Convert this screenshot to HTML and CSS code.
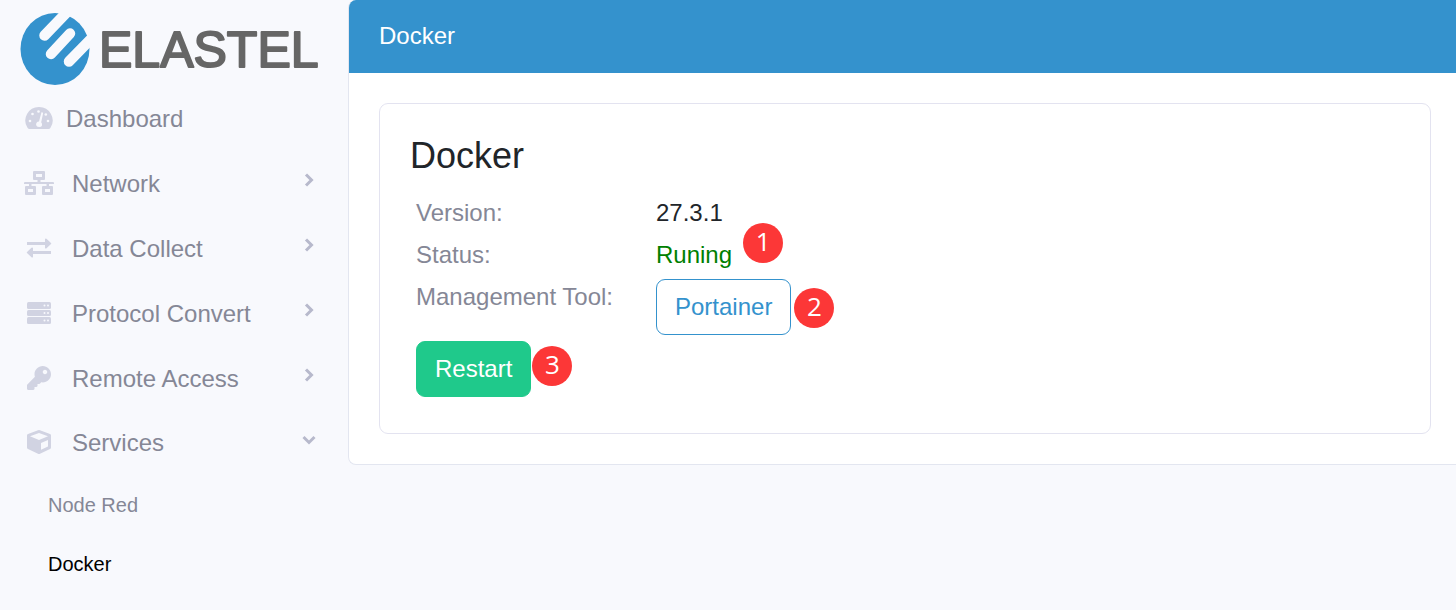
FILE: index.html
```html
<!DOCTYPE html>
<html lang="en">
<head>
<meta charset="utf-8">
<meta name="viewport" content="width=device-width, initial-scale=1">
<title>Docker</title>
<link rel="stylesheet" href="styles.css">
</head>
<body>
<div class="layout">
  <aside class="sidebar">
    <a class="brand" href="#" aria-label="Elastel">
      <svg class="brand-logo" viewBox="0 0 304 76">
        <defs><clipPath id="disc"><ellipse cx="35" cy="37" rx="35.500" ry="37"/></clipPath></defs>
        <ellipse cx="35" cy="37" rx="34.500" ry="36" fill="#3492cd"/>
        <g clip-path="url(#disc)" fill="none" stroke="#f8f9fd" stroke-width="10.500" stroke-linecap="round" stroke-linejoin="round">
          <path d="M24.500 23.500L48 -1"/>
          <path d="M31 42L50 21.500"/>
          <path d="M49 49.500L74 24"/>
        </g>
        <text class="brand-name" x="79" y="55">ELASTEL</text>
      </svg>
    </a>
    <nav class="nav">
      <a class="nav-item nav-item-plain" href="#">
        <svg class="nav-icon" viewBox="0 0 30 26"><path d="M15 1A13.500 13.500 0 0 0 3.500 21.800Q4.200 23 5.500 23H24.500Q25.800 23 26.500 21.800A13.500 13.500 0 0 0 15 1Z"/><g class="cut"><circle cx="14.500" cy="5.500" r="1.300"/><circle cx="8.500" cy="8" r="1.300"/><circle cx="6" cy="15" r="1.300"/><circle cx="24" cy="15" r="1.300"/><circle cx="21.800" cy="8.500" r="1.300"/><path d="M17.500 6.200Q18.900 6 19.100 7.200L17.200 16.200Q18.400 17.600 18 19.500Q17.500 21 15 21Q12.500 21 12.100 19Q12 16 15 15.600Z"/></g></svg>
        <span>Dashboard</span>
      </a>
      <a class="nav-item" href="#">
        <svg class="nav-icon" viewBox="0 0 30 26"><path fill-rule="evenodd" d="M10 1H20Q21 1 21 2V9Q21 10 20 10H16.500V12H29Q30 12 30 13V14H25V16H28Q29 16 29 17V24Q29 25 28 25H19Q18 25 18 24V17Q18 16 19 16H22.500V14H7.500V16H11Q12 16 12 17V24Q12 25 11 25H2Q1 25 1 24V17Q1 16 2 16H5V14H0V13Q0 12 1 12H13.500V10H10Q9 10 9 9V2Q9 1 10 1ZM12 4V7H18V4ZM4 19V22H9V19ZM21 19V22H26V19Z"/></svg>
        <span class="nav-label">Network</span>
        <svg class="chevron" viewBox="0 0 14 14"><path d="M4 1.500L9.500 7L4 12.500"/></svg>
      </a>
      <a class="nav-item" href="#">
        <svg class="nav-icon" viewBox="0 0 30 26"><path d="M3 7H21V4Q21.500 3 22.500 3.700L27 8Q27.500 8.500 27 9L22.500 13.300Q21.500 14 21 13V10H3ZM27 16H9V13Q8.500 12 7.500 12.700L3 17Q2.500 17.500 3 18L7.500 22.300Q8.500 23 9 22V19H27Z"/></svg>
        <span class="nav-label">Data Collect</span>
        <svg class="chevron" viewBox="0 0 14 14"><path d="M4 1.500L9.500 7L4 12.500"/></svg>
      </a>
      <a class="nav-item" href="#">
        <svg class="nav-icon" viewBox="0 0 30 26"><rect x="3" y="2" width="24" height="7" rx="1.500"/><rect x="3" y="10" width="24" height="6" rx="1.500"/><rect x="3" y="17" width="24" height="7" rx="1.500"/><g class="cut"><circle cx="20.500" cy="5.500" r="1"/><circle cx="24" cy="5.500" r="1"/><circle cx="20.500" cy="13" r="1"/><circle cx="24" cy="13" r="1"/><circle cx="20.500" cy="20.500" r="1"/><circle cx="24" cy="20.500" r="1"/></g></svg>
        <span class="nav-label">Protocol Convert</span>
        <svg class="chevron" viewBox="0 0 14 14"><path d="M4 1.500L9.500 7L4 12.500"/></svg>
      </a>
      <a class="nav-item" href="#">
        <svg class="nav-icon" viewBox="-64 -21 640 555"><path d="M512 176.001C512 273.203 433.202 352 336 352c-11.220 0-22.190-1.062-32.827-3.069l-24.012 27.014A23.999 23.999 0 0 1 261.223 384H224v40c0 13.255-10.745 24-24 24h-40v40c0 13.255-10.745 24-24 24H24c-13.255 0-24-10.745-24-24v-78.059c0-6.365 2.529-12.470 7.029-16.971l161.802-161.802C163.108 213.814 160 195.271 160 176 160 78.798 238.797.001 335.999 0 433.488-.001 512 78.511 512 176.001zM336 128c0 26.510 21.490 48 48 48s48-21.490 48-48-21.490-48-48-48-48 21.490-48 48z"/></svg>
        <span class="nav-label">Remote Access</span>
        <svg class="chevron" viewBox="0 0 14 14"><path d="M4 1.500L9.500 7L4 12.500"/></svg>
      </a>
      <a class="nav-item" href="#" aria-expanded="true">
        <svg class="nav-icon" viewBox="0 0 30 26"><path fill-rule="evenodd" d="M14 .3Q15 -.1 16 .3L26 4Q27 4.400 27 5.500V17.500Q27 18.600 26 19.100L16 23.700Q15 24.200 14 23.700L4 19.100Q3 18.600 3 17.500V5.500Q3 4.400 4 4ZM15 3L6 6.300L15 10L24 6.300ZM17 13V19.800L24 16.500V10Z"/></svg>
        <span>Services</span>
        <svg class="chevron" viewBox="0 0 14 14"><path d="M1.500 4L7 9.500L12.500 4"/></svg>
      </a>
      <div class="subnav">
        <a href="#">Node Red</a>
        <a class="active" href="#" aria-current="page">Docker</a>
      </div>
    </nav>
  </aside>
  <main class="panel">
    <header class="panel-header">Docker</header>
    <div class="panel-body">
      <section class="card">
        <h1>Docker</h1>
        <dl class="details">
          <dt>Version:</dt>
          <dd>27.3.1</dd>
          <dt>Status:</dt>
          <dd class="running"><span class="anchor">Runing<span class="pin pin-status">1</span></span></dd>
          <dt>Management Tool:</dt>
          <dd><span class="anchor"><button class="btn btn-outline" type="button">Portainer</button><span class="pin pin-tool">2</span></span></dd>
        </dl>
        <span class="anchor restart"><button class="btn btn-green" type="button">Restart</button><span class="pin pin-restart">3</span></span>
      </section>
    </div>
  </main>
</div>
</body>
</html>
```

FILE: styles.css
```css
* { box-sizing: border-box; }

body {
  margin: 0;
  background: #f8f9fd;
  color: #212529;
  font: 24px/36px "Liberation Sans", Arial, sans-serif;
}

a { color: inherit; text-decoration: none; }

.layout { display: flex; align-items: flex-start; }

.sidebar { flex: 0 0 348px; color: #858796; }

.brand { display: block; padding: 12px 0 0 20px; }
.brand-logo { display: block; width: 304px; height: 76px; }
.brand-name {
  font: 50px "Liberation Sans", Arial, sans-serif;
  fill: #666;
  stroke: #666;
  stroke-width: 2px;
  stroke-linejoin: round;
}

.nav { display: flex; flex-direction: column; }
.nav-item {
  display: flex;
  align-items: center;
  gap: 18px;
  height: 65px;
  padding: 0 32px 0 24px;
}
.nav-item-plain { gap: 12px; height: 62px; }
.nav-label { padding-top: 2px; }
.nav-icon { width: 30px; height: 26px; fill: #d1d3e2; }
.cut { fill: #f8f9fd; }
.chevron {
  width: 14px;
  height: 14px;
  margin: 0 0 5px auto;
  fill: none;
  stroke: #b7b9cc;
  stroke-width: 3;
}

.subnav { display: flex; flex-direction: column; padding: 1px 0 0 48px; font-size: 20px; }
.subnav a { height: 59px; line-height: 59px; }
.subnav .active { color: #000; }

.panel {
  flex: 1;
  min-width: 0;
  overflow: hidden;
  background: #fff;
  border: 1px solid #e3e6f0;
  border-width: 0 0 1px 1px;
  border-radius: 8px 0 0 8px;
}
.panel-header { padding: 18px 30px 19px; background: #3492cd; color: #fff; }
.panel-body { padding: 30px 25px 30px 30px; }

.card {
  padding: 30px 30px 36px;
  border: 1px solid #e3e3f0;
  border-radius: 9px;
}
.card h1 { margin: 0 0 18px; font-size: 36px; line-height: 43px; font-weight: 400; }

.details {
  display: grid;
  grid-template-columns: 234px 1fr;
  gap: 6px;
  margin: 0 6px 6px;
}
.details dt { color: #858796; }
.details dd { margin: 0; }
.details .running { color: #008000; }

.anchor { position: relative; display: inline-block; vertical-align: top; }
.restart { margin-left: 6px; }

.btn {
  display: block;
  padding: 9px 18px;
  border: 1px solid;
  border-radius: 9px;
  font: inherit;
}
.btn-outline { background: #fff; border-color: #3492cd; color: #3492cd; }
.btn-green { background: #1fc98b; border-color: #1fc98b; color: #fff; }

.pin {
  position: absolute;
  left: 100%;
  width: 40px;
  height: 40px;
  border-radius: 50%;
  background: #fc3737;
  color: #fff;
  font: 26px/36px "Open Sans", sans-serif;
  text-align: center;
}
.pin-status { top: -14px; margin-left: 11px; }
.pin-tool { top: 9px; margin-left: 3px; }
.pin-restart { top: 5px; margin-left: 1px; }
```
